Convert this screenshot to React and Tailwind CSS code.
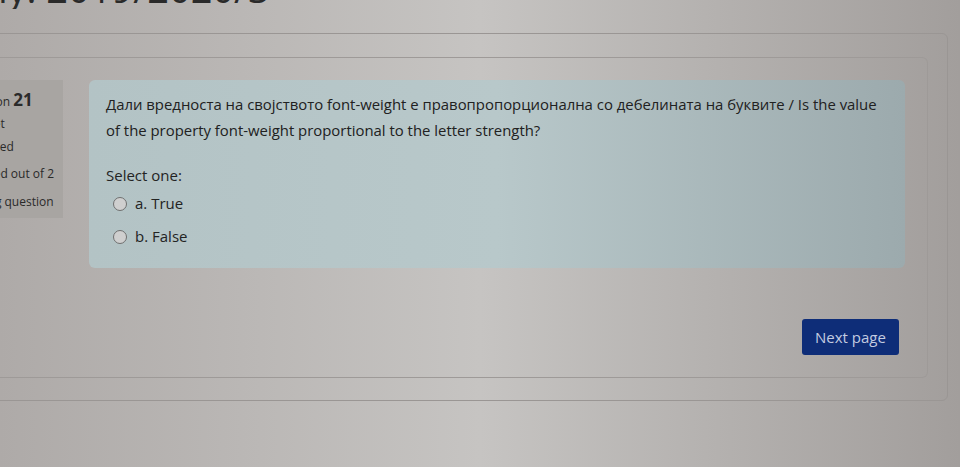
import React from "react";

function Radio({ label }) {
  return (
    <div className="flex items-center h-[33px]">
      <span className="w-[14px] h-[14px] rounded-full border-[1.5px] border-[#6f6f6f] bg-[#cfcfcf] shrink-0" />
      <span className="ml-[8px] text-[15px] text-[#232323]">{label}</span>
    </div>
  );
}

export default function App() {
  return (
    <div
      className="w-[960px] h-[467px] overflow-hidden bg-linear-to-r from-[#aeaaa8] via-[#c6c4c2] to-[#a29e9c] relative"
      style={{ fontFamily: '"Open Sans", "Noto Sans", sans-serif' }}
    >
      {/* cut-off heading */}
      <div className="h-[9px] overflow-hidden">
        <div className="mt-[-31px] ml-[-272px] text-[38px] leading-[38px] text-[#2a2a2a] whitespace-nowrap">
          Web Typography: 2019/2020/3
        </div>
      </div>

      {/* outer card */}
      <div className="mt-[24px] ml-[-10px] w-[958px] h-[368px] border border-[#9a9694] rounded-md pt-[23px] pr-[19px]">
        {/* inner card */}
        <div className="h-[321px] border-t border-r border-b border-[#9e9a98] rounded-r-md pl-[10px] pt-[22px] pr-[22px]">
          <div className="flex items-start">
            {/* info box */}
            <div className="w-[140px] ml-[-78px] h-[138px] bg-[#a8a5a2] pt-[8px] text-[#2a2a2a] overflow-hidden">
              <div className="whitespace-nowrap ml-[36px] leading-[24px] h-[24px]">
                <span className="text-[12px]">Question </span>
                <span className="text-[17px] font-bold">21</span>
              </div>
              <div className="ml-[41px] text-[12px] leading-[23px] h-[23px]">Not yet</div>
              <div className="ml-[36px] text-[12px] leading-[23px] h-[23px]">answered</div>
              <div className="ml-[42px] text-[12px] leading-[28px] h-[28px] mt-[2px] whitespace-nowrap">Marked out of 2</div>
              <div className="ml-[56px] text-[12px] leading-[28px] h-[28px] whitespace-nowrap">Flag question</div>
            </div>

            {/* question box */}
            <div className="ml-[26px] flex-1 h-[188px] rounded-md bg-linear-to-r from-[#b3c3c5] via-[#b8c8ca] to-[#9caaad] pl-[17px] pt-[11px]">
              <div className="text-[14.9px] leading-[26px] text-[#212121] whitespace-nowrap">
                Дали вредноста на својството font-weight е правопропорционална со дебелината на буквите / Is the value
                <br />
                of the property font-weight proportional to the letter strength?
              </div>
              <div className="mt-[20px] text-[15px] leading-[24px] text-[#232323]">Select one:</div>
              <div className="ml-[7px]">
                <Radio label="a. True" />
                <Radio label="b. False" />
              </div>
            </div>
          </div>

          <div className="flex justify-end mt-[51px] pr-[6px]">
            <button className="w-[97px] h-[36px] rounded-[3px] bg-[#0e2d78] text-[#c3cbe0] text-[15px]">
              Next page
            </button>
          </div>
        </div>
      </div>
    </div>
  );
}
